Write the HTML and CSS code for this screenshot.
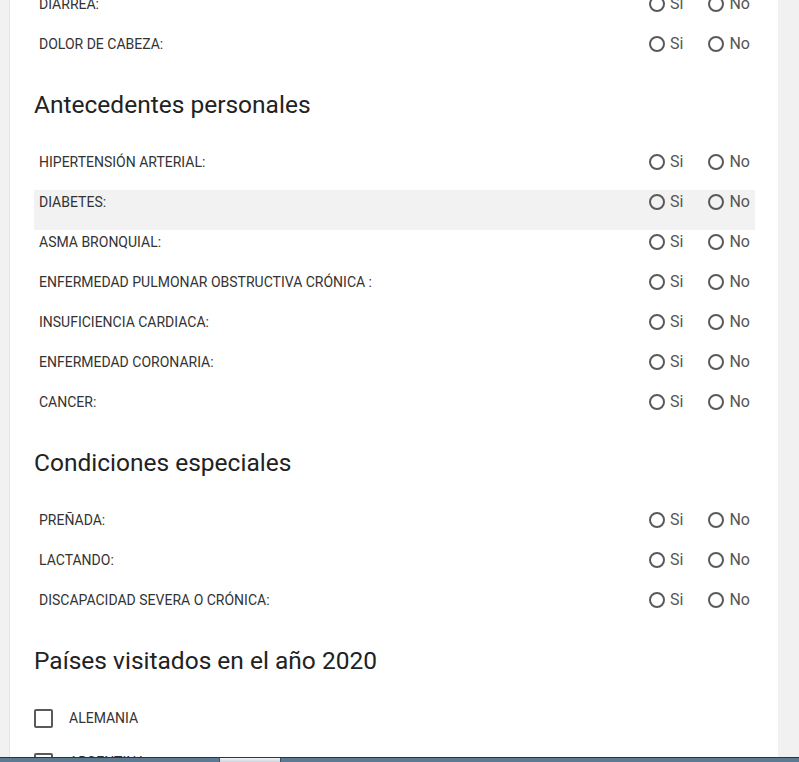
FILE: index.html
```html
<!DOCTYPE html>
<html lang="es">
<head>
<meta charset="utf-8">
<link rel="stylesheet" href="styles.css">
</head>
<body>
<div class="page">
  <main class="card">
    <div class="row first">
      <span class="label">DIARREA:</span>
      <div class="radios"><span class="opt"><span class="circle"></span>Si</span><span class="opt"><span class="circle"></span>No</span></div>
    </div>
    <div class="row">
      <span class="label">DOLOR DE CABEZA:</span>
      <div class="radios"><span class="opt"><span class="circle"></span>Si</span><span class="opt"><span class="circle"></span>No</span></div>
    </div>

    <h2 class="section">Antecedentes personales</h2>
    <div class="row">
      <span class="label">HIPERTENSIÓN ARTERIAL:</span>
      <div class="radios"><span class="opt"><span class="circle"></span>Si</span><span class="opt"><span class="circle"></span>No</span></div>
    </div>
    <div class="row hover">
      <span class="label">DIABETES:</span>
      <div class="radios"><span class="opt"><span class="circle"></span>Si</span><span class="opt"><span class="circle"></span>No</span></div>
    </div>
    <div class="row">
      <span class="label">ASMA BRONQUIAL:</span>
      <div class="radios"><span class="opt"><span class="circle"></span>Si</span><span class="opt"><span class="circle"></span>No</span></div>
    </div>
    <div class="row">
      <span class="label">ENFERMEDAD PULMONAR OBSTRUCTIVA CRÓNICA :</span>
      <div class="radios"><span class="opt"><span class="circle"></span>Si</span><span class="opt"><span class="circle"></span>No</span></div>
    </div>
    <div class="row">
      <span class="label">INSUFICIENCIA CARDIACA:</span>
      <div class="radios"><span class="opt"><span class="circle"></span>Si</span><span class="opt"><span class="circle"></span>No</span></div>
    </div>
    <div class="row">
      <span class="label">ENFERMEDAD CORONARIA:</span>
      <div class="radios"><span class="opt"><span class="circle"></span>Si</span><span class="opt"><span class="circle"></span>No</span></div>
    </div>
    <div class="row">
      <span class="label">CANCER:</span>
      <div class="radios"><span class="opt"><span class="circle"></span>Si</span><span class="opt"><span class="circle"></span>No</span></div>
    </div>

    <h2 class="section">Condiciones especiales</h2>
    <div class="row">
      <span class="label">PREÑADA:</span>
      <div class="radios"><span class="opt"><span class="circle"></span>Si</span><span class="opt"><span class="circle"></span>No</span></div>
    </div>
    <div class="row">
      <span class="label">LACTANDO:</span>
      <div class="radios"><span class="opt"><span class="circle"></span>Si</span><span class="opt"><span class="circle"></span>No</span></div>
    </div>
    <div class="row">
      <span class="label">DISCAPACIDAD SEVERA O CRÓNICA:</span>
      <div class="radios"><span class="opt"><span class="circle"></span>Si</span><span class="opt"><span class="circle"></span>No</span></div>
    </div>

    <h2 class="section">Países visitados en el año 2020</h2>
    <div class="check-row"><span class="box"></span><span class="check-label">ALEMANIA</span></div>
    <div class="check-row"><span class="box"></span><span class="check-label">ARGENTINA</span></div>
  </main>
</div>
<div class="taskbar"><span class="task"></span></div>
</body>
</html>
```

FILE: styles.css
```css
html, body {
  margin: 0;
  padding: 0;
  height: 100%;
  overflow: hidden;
}
body {
  background: #f1f1f1;
  font-family: Roboto, "Liberation Sans", Arial, sans-serif;
  color: #333;
}
.page {
  display: flex;
  padding-left: 10px;
  height: 100%;
}
.card {
  width: 721px;
  background: #fff;
  padding: 0 23px 0 24px;
  box-shadow: -1px 0 0 #e4e4e4;
  min-height: 100%;
}
.row {
  display: flex;
  justify-content: space-between;
  align-items: flex-start;
  height: 40px;
  box-sizing: border-box;
  padding: 2px 5px 0 5px;
  font-size: 14px;
  line-height: 20px;
}
.row.first {
  margin-top: -8px;
}
.row.hover {
  background: #f2f2f2;
}
.label {
  color: #333;
}
.radios {
  display: flex;
  gap: 25px;
}
.opt {
  display: flex;
  align-items: center;
  gap: 5px;
  color: #555;
  font-size: 16px;
}
.circle {
  width: 16px;
  height: 16px;
  box-sizing: border-box;
  border: 2px solid #5a5a5a;
  border-radius: 50%;
}
.section {
  margin: 19px 0 31px;
  font-size: 24.5px;
  line-height: 28px;
  font-weight: 400;
  color: #222;
}
.check-row {
  display: flex;
  align-items: center;
  height: 44px;
  gap: 16px;
}
.section + .check-row {
  margin-top: -10px;
}
.box {
  width: 19px;
  height: 19px;
  box-sizing: border-box;
  border: 2px solid #5a5a5a;
  border-radius: 2px;
}
.check-label {
  font-size: 14px;
  color: #333;
}
.taskbar {
  position: fixed;
  left: 0;
  right: 0;
  bottom: 0;
  height: 4px;
  background: #5b7a93;
  border-top: 1px solid #22384a;
}
.task {
  position: absolute;
  left: 219px;
  top: 0;
  width: 60px;
  height: 4px;
  background: linear-gradient(#f4f6f8, #c9d3dc);
  border-left: 1px solid #3d5569;
  border-right: 1px solid #3d5569;
}
```
